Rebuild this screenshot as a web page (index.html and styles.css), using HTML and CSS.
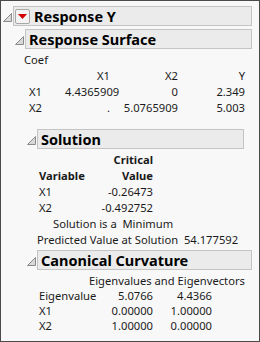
FILE: index.html
```html
<!DOCTYPE html>
<html lang="en">
<head>
    <meta charset="UTF-8">
    <title>Response Y</title>
    <link rel="stylesheet" href="styles.css">
</head>
<body>
    <div class="report">
        <div class="node">
            <div class="node-head">
                <svg class="twisty" width="9" height="9" viewBox="0 0 9 9"><polygon points="8.5,0.5 8.5,8.5 0.5,8.5" fill="#d8d8d8" stroke="#8a8a8a" stroke-width="1"/></svg>
                <div class="title title-top">
                    <span class="menu-btn"><svg width="9" height="5" viewBox="0 0 9 5"><polygon points="0,0 9,0 4.5,5" fill="#d40000"/></svg></span>
                    Response Y
                </div>
            </div>

            <div class="node sub">
                <div class="node-head">
                    <svg class="twisty" width="9" height="9" viewBox="0 0 9 9"><polygon points="8.5,0.5 8.5,8.5 0.5,8.5" fill="#d8d8d8" stroke="#8a8a8a" stroke-width="1"/></svg>
                    <div class="title">Response Surface</div>
                </div>
                <div class="coef">
                    <div class="caption">Coef</div>
                    <div class="coef-grid">
                        <span></span><span class="num">X1</span><span class="num">X2</span><span class="num">Y</span>
                        <span>X1</span><span class="num">4.4365909</span><span class="num">0</span><span class="num">2.349</span>
                        <span>X2</span><span class="num">.</span><span class="num">5.0765909</span><span class="num">5.003</span>
                    </div>
                </div>

                <div class="node sub">
                    <div class="node-head">
                        <svg class="twisty" width="9" height="9" viewBox="0 0 9 9"><polygon points="8.5,0.5 8.5,8.5 0.5,8.5" fill="#d8d8d8" stroke="#8a8a8a" stroke-width="1"/></svg>
                        <div class="title title-solution">Solution</div>
                    </div>
                    <div class="body">
                        <div class="sol-grid">
                            <span></span><span class="num bold">Critical</span>
                            <span class="bold">Variable</span><span class="num bold">Value</span>
                            <span>X1</span><span class="num">-0.26473</span>
                            <span>X2</span><span class="num">-0.492752</span>
                        </div>
                        <div class="note">Solution is a&nbsp; Minimum</div>
                        <div class="predicted">Predicted Value at Solution&nbsp; 54.177592</div>
                    </div>
                </div>

                <div class="node sub canon">
                    <div class="node-head">
                        <svg class="twisty" width="9" height="9" viewBox="0 0 9 9"><polygon points="8.5,0.5 8.5,8.5 0.5,8.5" fill="#d8d8d8" stroke="#8a8a8a" stroke-width="1"/></svg>
                        <div class="title">Canonical Curvature</div>
                    </div>
                    <div class="body">
                        <div class="eigen-title">Eigenvalues and Eigenvectors</div>
                        <div class="eigen-grid">
                            <span>Eigenvalue</span><span class="num">5.0766</span><span class="num">4.4366</span>
                            <span>X1</span><span class="num">0.00000</span><span class="num">1.00000</span>
                            <span>X2</span><span class="num">1.00000</span><span class="num">0.00000</span>
                        </div>
                    </div>
                </div>
            </div>
        </div>
    </div>
</body>
</html>
```

FILE: styles.css
```css
body {
    margin: 0;
    font-family: "Noto Sans", "Open Sans", sans-serif;
    font-size: 11.2px;
    color: #1a1a1a;
}

.report {
    width: 260px;
    height: 342px;
    box-sizing: border-box;
    border: 1px solid #4a4a4a;
    background-color: #f8f8f8;
    padding: 5px 7px 0 2px;
    overflow: hidden;
}

.node-head {
    display: flex;
    align-items: center;
    gap: 1px;
}

.twisty {
    flex: none;
    margin-top: 3px;
}

.title {
    flex: 1;
    height: 18px;
    display: flex;
    align-items: center;
    gap: 4px;
    padding-left: 3px;
    background-color: #ebebeb;
    border: 1px solid #c4c4c4;
    font-size: 14.5px;
    font-weight: bold;
    color: #000;
    white-space: nowrap;
}

.title-top {
    padding-left: 1px;
}

.title-solution {
    flex: none;
    width: 202px;
}

.menu-btn {
    width: 13px;
    height: 13px;
    border: 1px solid #a8a8a8;
    border-radius: 2px;
    background-color: #f4f4f4;
    display: flex;
    align-items: center;
    justify-content: center;
}

.sub {
    margin-top: 3px;
    padding-left: 12px;
}

.coef {
    padding: 3px 0 10px 0;
}

.caption {
    line-height: 16px;
    padding-left: 9px;
}

.coef-grid {
    display: grid;
    grid-template-columns: 36px 45px 68px 67px;
    grid-auto-rows: 16px;
    line-height: 16px;
    padding-left: 14px;
}

.num {
    text-align: right;
}

.bold {
    font-weight: bold;
}

.body {
    padding-left: 12px;
    padding-top: 3px;
    white-space: nowrap;
}

.sol-grid {
    display: grid;
    grid-template-columns: 60px 54px;
    grid-auto-rows: 16px;
    line-height: 16px;
}

.note {
    line-height: 16px;
    padding-left: 14px;
}

.predicted {
    line-height: 16px;
    margin-left: -2px;
}

.canon {
    margin-top: 2px;
}

.eigen-title {
    line-height: 15px;
    padding-left: 50px;
}

.eigen-grid {
    display: grid;
    grid-template-columns: 62px 52px 59px;
    grid-auto-rows: 15px;
    line-height: 15px;
}
```
